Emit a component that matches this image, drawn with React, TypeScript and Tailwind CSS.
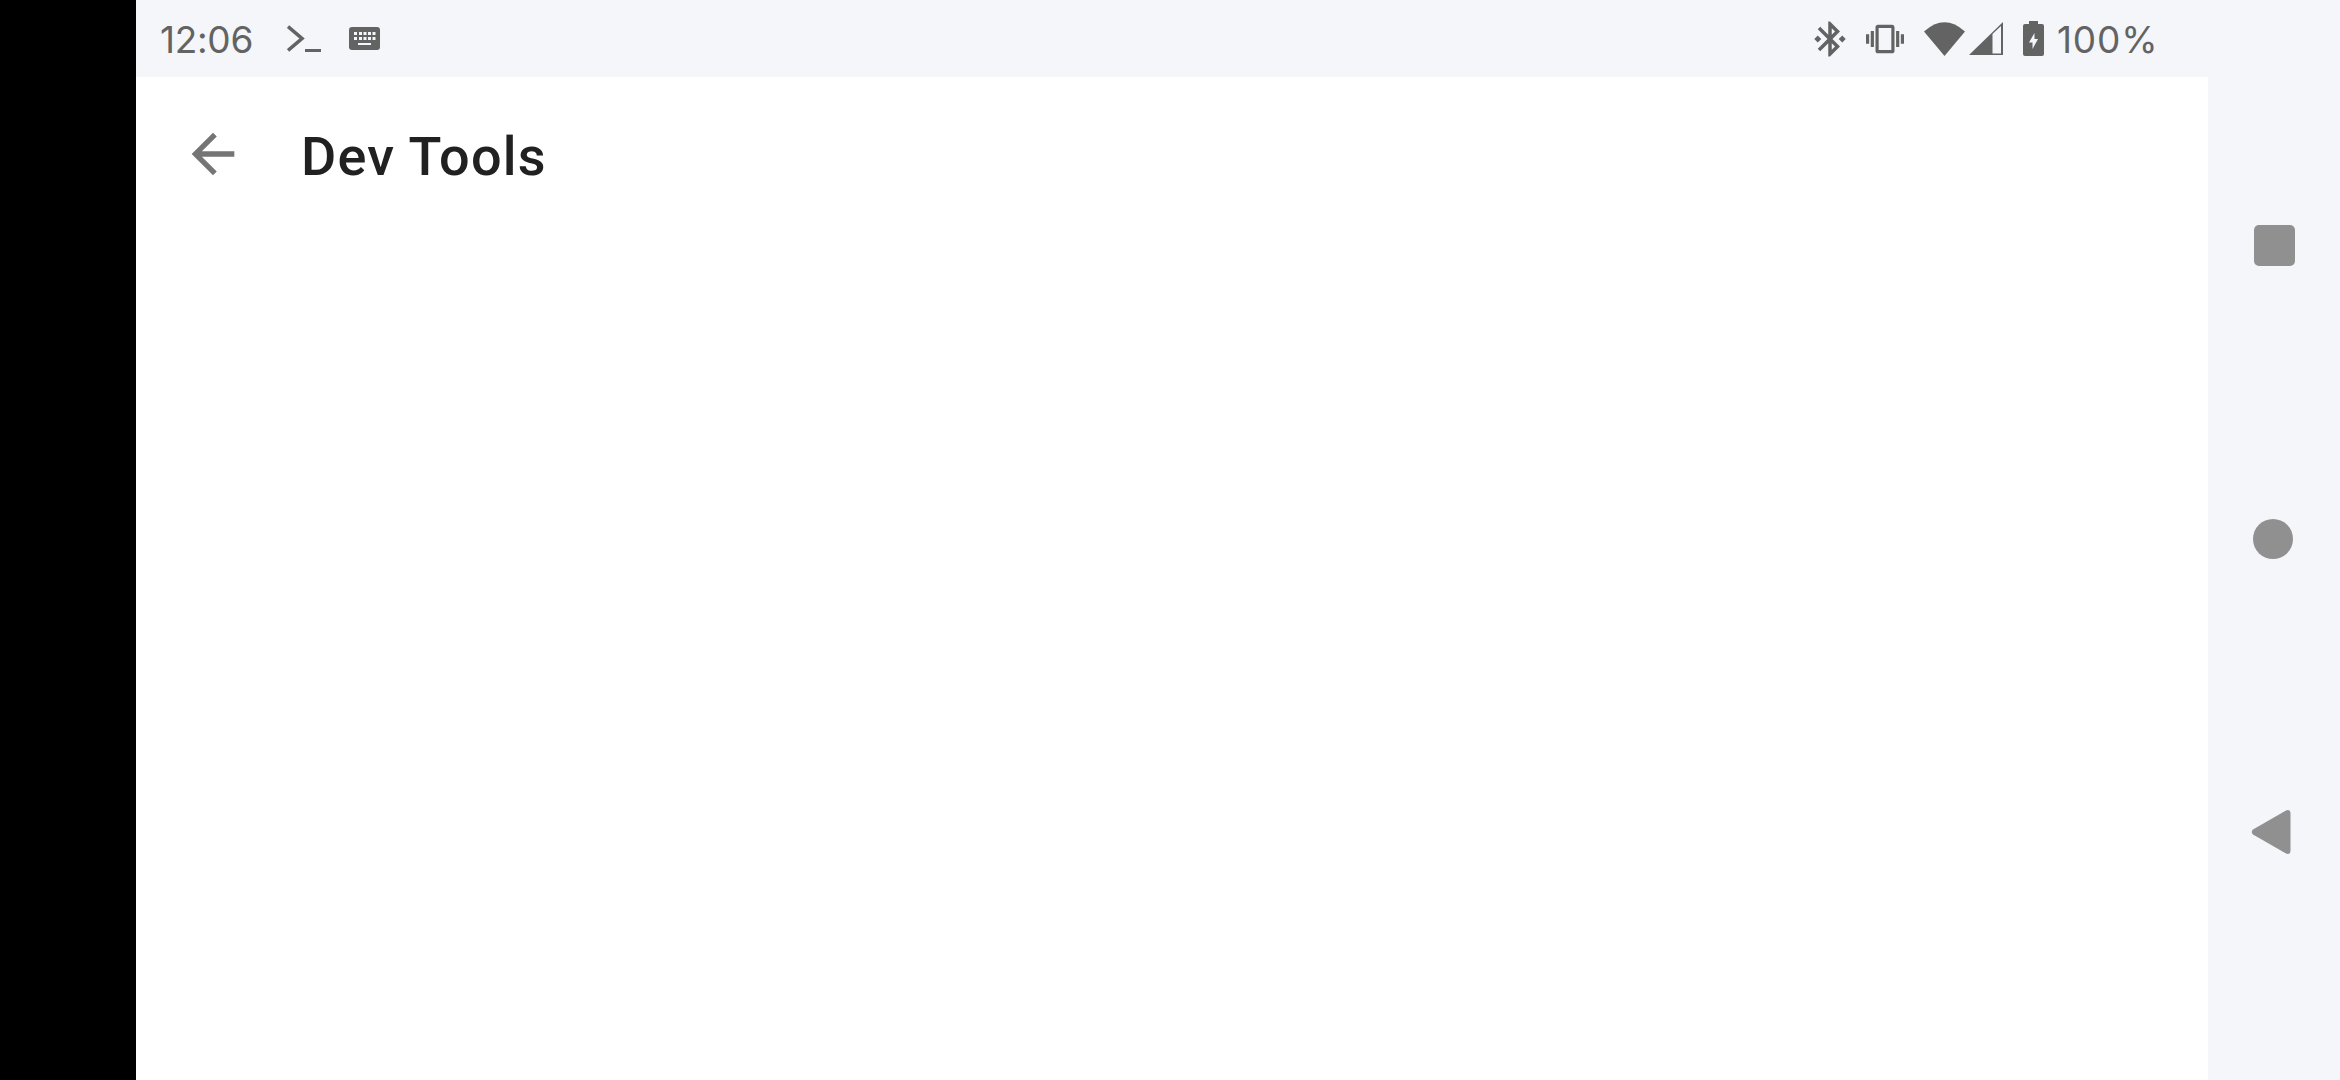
export default function App() {
  return (
    <div className="flex h-[1080px] w-[2340px] overflow-hidden bg-black font-['Roboto',sans-serif]">
      <div className="w-[136px] shrink-0 bg-black" />
      <div className="flex w-[2072px] shrink-0 flex-col bg-white">
        <div className="flex h-[77px] shrink-0 items-center justify-between bg-[#f4f6fa] pr-[54px] pl-[24px] text-[#636363]">
          <div className="flex items-center">
            <span className="mt-[2px] w-[92px] text-[37px] leading-[46px] tracking-[-0.3px] font-['Inter',sans-serif] whitespace-nowrap">12:06</span>
            <svg className="ml-[35px] block" width="34" height="28" viewBox="0 0 34 28" fill="none">
              <path d="M1 1.500 L15 13.500 L1 25.500" stroke="#636363" strokeWidth="3.600" />
              <path d="M18 25.500 H34" stroke="#636363" strokeWidth="3" />
            </svg>
            <svg className="ml-[28px] block" width="31" height="23" viewBox="0 0 31 23">
              <path fillRule="evenodd" fill="#636363" d="M3 0H28A3 3 0 0 1 31 3V20A3 3 0 0 1 28 23H3A3 3 0 0 1 0 20V3A3 3 0 0 1 3 0ZM5 5V8H8V5ZM10 5V8H13V5ZM14.500 5V8H17.500V5ZM19 5V8H22V5ZM23.500 5V8H26.500V5ZM5 10V13H8V10ZM10 10V13H13V10ZM14.500 10V13H17.500V10ZM19 10V13H22V10ZM23.500 10V13H26.500V10ZM9 16V18H22V16Z" />
            </svg>
          </div>
          <div className="flex items-center">
            <svg className="block" width="42" height="42" viewBox="0 0 24 24" fill="#636363">
              <path d="M7 12l-2-2-2 2 2 2 2-2zm10.710-4.290L12 2h-1v7.590L6.410 5 5 6.410 10.590 12 5 17.590 6.410 19 11 14.410V22h1l5.710-5.710-4.300-4.290 4.300-4.290zM13 5.830l1.880 1.880L13 9.590V5.830zm1.880 10.460L13 18.170v-3.760l1.880 1.880zM19 10l-2 2 2 2 2-2-2-2z" />
            </svg>
            <svg className="ml-[15px] block" width="38" height="38" viewBox="0 0 24 24" fill="#636363">
              <path d="M0 15h2V9H0v6zm3 2h2V7H3v10zm19-8v6h2V9h-2zm-3 8h2V7h-2v10zM16.500 3h-9C6.670 3 6 3.670 6 4.500v15c0 .83.670 1.500 1.500 1.500h9c.83 0 1.500-.670 1.500-1.500v-15c0-.83-.670-1.500-1.500-1.500zM16 19H8V5h8v14z" />
            </svg>
            <svg className="ml-[20px] block" width="41" height="34" viewBox="0 0 41 34" fill="#636363">
              <path d="M0 9.500 Q20.500 -9 41 9.500 L20.500 34 Z" />
            </svg>
            <svg className="ml-[4px] block" width="34" height="33" viewBox="0 0 34 33" fill="#636363">
              <path fillRule="evenodd" d="M34 0V33H0ZM23.500 12V31.500H32V4Z" />
            </svg>
            <svg className="ml-[20px] block" width="21" height="35" viewBox="0 0 21 35" fill="#636363">
              <path fillRule="evenodd" d="M6 0H15V3H19A2 2 0 0 1 21 5V33A2 2 0 0 1 19 35H2A2 2 0 0 1 0 33V5A2 2 0 0 1 2 3H6ZM11.500 12 L6 21.500H9.500V28L15 18H11.500Z" />
            </svg>
            <span className="mt-[2px] ml-[13px] w-[97px] text-[37px] leading-[46px] font-['Inter',sans-serif] tracking-[0.8px] whitespace-nowrap">100%</span>
          </div>
        </div>
        <div className="flex h-[154px] shrink-0 items-center pl-[45px]">
          <svg className="block" width="64" height="64" viewBox="0 0 24 24" fill="#757575">
            <path d="M20 11H7.830l5.590-5.590L12 4l-8 8 8 8 1.410-1.410L7.830 13H20v-2z" />
          </svg>
          <span className="mt-[6px] ml-[56px] text-[54px] leading-[60px] font-medium tracking-[1.2px] text-[#212121]">Dev Tools</span>
        </div>
        <div className="flex-1 bg-white" />
      </div>
      <div className="flex w-[132px] shrink-0 flex-col items-center justify-center bg-[#f4f6fa]">
        <div className="mb-[253px] h-[41px] w-[41px] rounded-[5px] bg-[#909090]" />
        <div className="mb-[250px] h-[40px] w-[40px] -translate-x-[1px] rounded-full bg-[#909090]" />
        <svg className="block -translate-x-[3px]" width="40" height="46" viewBox="0 0 40 46" fill="#909090">
          <path d="M35 1.500 Q39 0 39.500 4 V42 Q39 46 35 44.500 L2 25.500 Q-0.500 23 2 20.500 Z" />
        </svg>
      </div>
    </div>
  );
}
